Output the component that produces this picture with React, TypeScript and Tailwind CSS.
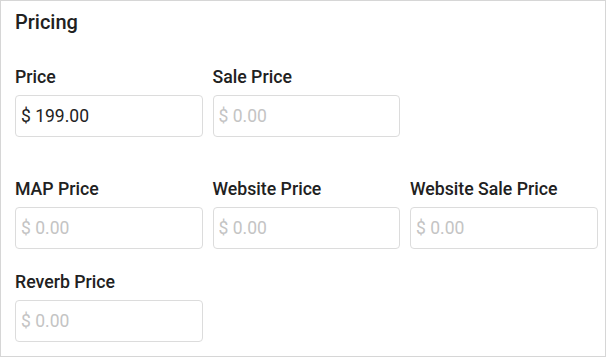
import React from "react";

function Field({ label, value }: { label: string; value?: string }) {
  return (
    <div className="flex flex-col">
      <label className="h-[20px] text-[17.7px] leading-[20px] font-medium text-[#212121]">{label}</label>
      <input
        readOnly
        defaultValue={value}
        placeholder="$ 0.00"
        className="mt-[8px] h-[42px] w-full rounded-[4px] border border-[#dcdcdc] bg-white px-[5px] text-[17.5px] text-[#222] placeholder:text-[#c4c4c4] outline-none"
      />
    </div>
  );
}

export default function App() {
  return (
    <div className="bg-white" style={{ fontFamily: "Roboto, 'Liberation Sans', sans-serif" }}>
      <div className="h-[357px] w-[606px] border border-[#d6d6d6] pl-[14px] pt-[9px]">
        <h2 className="h-[24px] text-[20px] leading-[24px] font-medium text-[#212121]">Pricing</h2>
        <div className="mt-[33px] grid w-[582.5px] grid-cols-3 gap-x-[10px]">
          <Field label="Price" value="$ 199.00" />
          <Field label="Sale Price" />
          <div />
        </div>
        <div className="mt-[42px] grid w-[582.5px] grid-cols-3 gap-x-[10px] gap-y-[23px]">
          <Field label="MAP Price" />
          <Field label="Website Price" />
          <Field label="Website Sale Price" />
          <Field label="Reverb Price" />
        </div>
      </div>
    </div>
  );
}
